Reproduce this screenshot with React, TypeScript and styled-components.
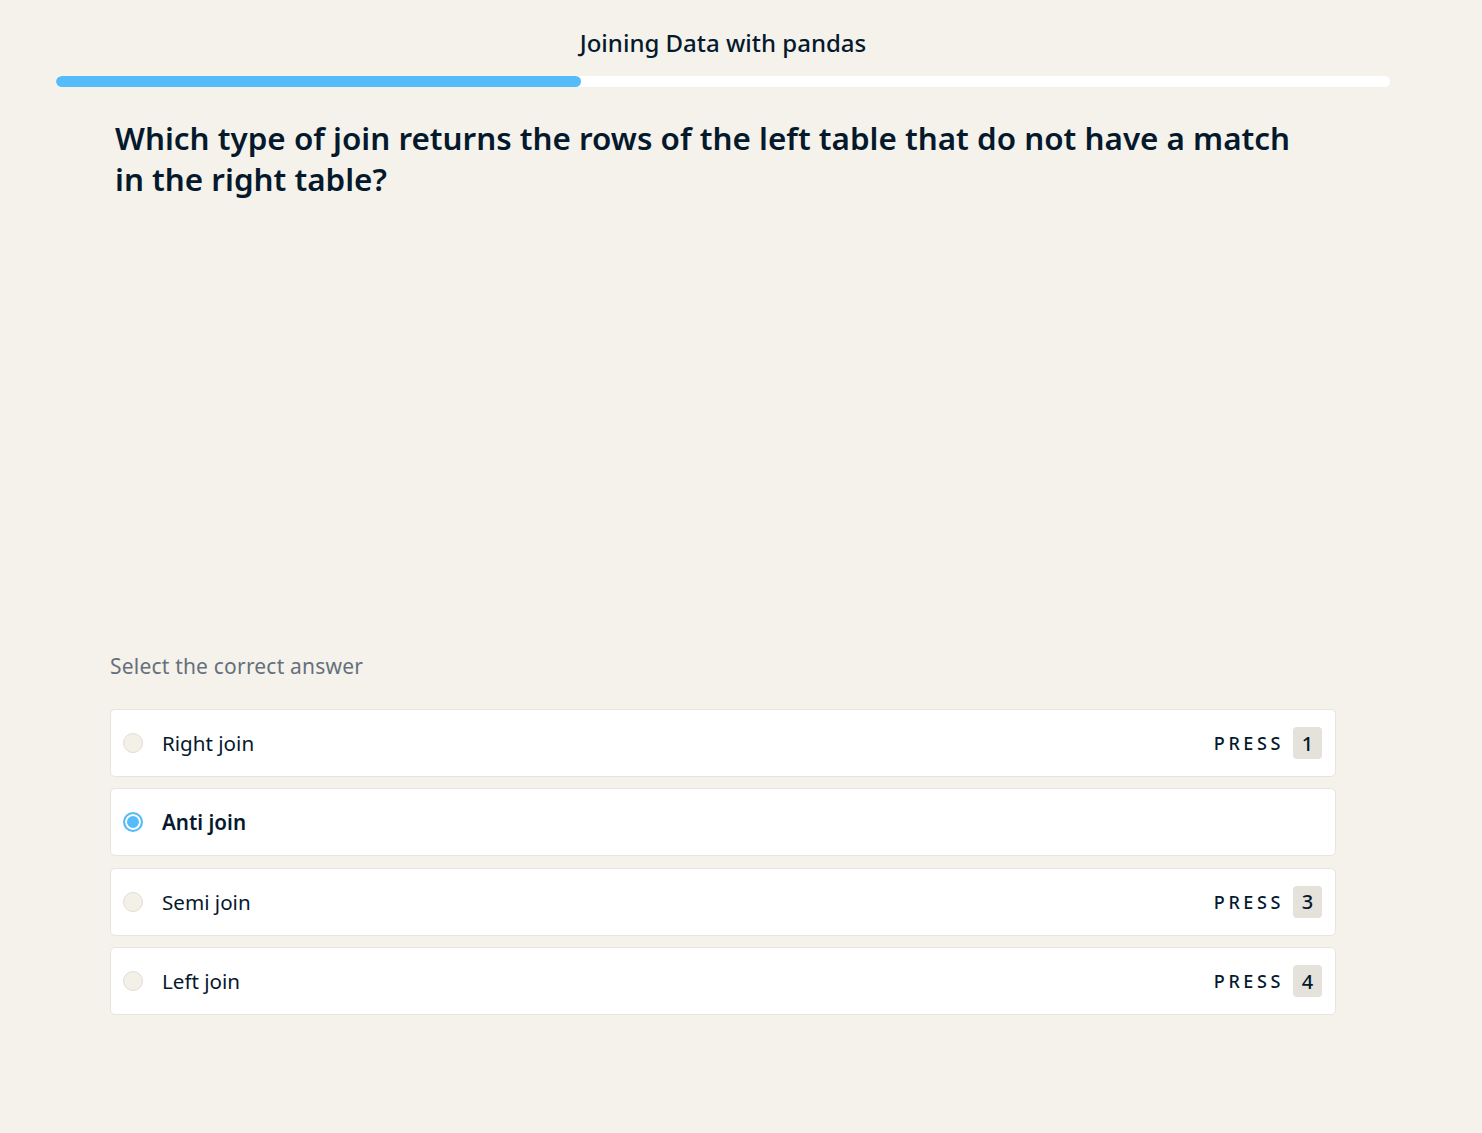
import React from "react";
import styled, { createGlobalStyle } from "styled-components";

const Global = createGlobalStyle`
  html, body { margin: 0; padding: 0; background: #f5f2eb; }
  body { font-family: "Noto Sans", "Open Sans", sans-serif; color: #05192d; }
`;

const Page = styled.main`
  width: 1446px;
  box-sizing: border-box;
  padding: 27px 56px 0;
  min-height: 1133px;
`;

const Title = styled.h1`
  margin: 0;
  text-align: center;
  font-size: 24px;
  line-height: 32px;
  font-weight: 500;
  color: #05192d;
`;

const Track = styled.div`
  margin-top: 17px;
  height: 11px;
  border-radius: 6px;
  background: #ffffff;
  overflow: hidden;
`;

const Fill = styled.div`
  height: 100%;
  border-radius: 6px;
  background: #56bbf9;
`;

const Body = styled.section`
  width: 1226px;
  margin: 0 auto;
`;

const Question = styled.h2`
  margin: 30px 0 0;
  padding-left: 5px;
  padding-right: 30px;
  font-size: 31.4px;
  line-height: 41px;
  font-weight: 600;
  color: #05192d;
`;

const Prompt = styled.p`
  margin: 454px 0 0;
  font-size: 21px;
  line-height: 26px;
  color: #65707c;
  letter-spacing: 0.2px;
`;

const Options = styled.div`
  margin-top: 30px;
  display: flex;
  flex-direction: column;
  gap: 11.4px;
`;

const Option = styled.div`
  height: 68px;
  box-sizing: border-box;
  display: flex;
  align-items: center;
  padding: 0 13px 0 12px;
  background: #ffffff;
  border: 1px solid #e8e5de;
  border-radius: 5px;
`;

const Radio = styled.span<{ $checked?: boolean }>`
  width: 20px;
  height: 20px;
  box-sizing: border-box;
  border-radius: 50%;
  flex: none;
  border: ${(p) => (p.$checked ? "2px solid #56bbf9" : "1px solid #e0ddd4")};
  background: ${(p) => (p.$checked ? "#56bbf9" : "#f3f0e8")};
  box-shadow: ${(p) => (p.$checked ? "inset 0 0 0 2px #ffffff" : "none")};
`;

const Label = styled.span<{ $bold?: boolean }>`
  margin-left: 19px;
  flex: 1;
  font-size: 20.6px;
  font-weight: ${(p) => (p.$bold ? 600 : 400)};
  color: #05192d;
`;

const Press = styled.span`
  font-size: 18px;
  font-weight: 500;
  letter-spacing: 3.6px;
  margin-right: 9px;
  color: #05192d;
`;

const Key = styled.span`
  width: 29px;
  height: 32px;
  border-radius: 4px;
  background: #e5e2db;
  display: flex;
  align-items: center;
  justify-content: center;
  font-size: 20px;
  font-weight: 500;
  color: #05192d;
`;

const answers = [
  { label: "Right join", key: "1" },
  { label: "Anti join", key: "2", checked: true },
  { label: "Semi join", key: "3" },
  { label: "Left join", key: "4" },
];

export default function App() {
  return (
    <>
      <Global />
      <Page>
        <Title>Joining Data with pandas</Title>
        <Track>
          <Fill style={{ width: `${((581 - 56) / (1390 - 56)) * 100}%` }} />
        </Track>
        <Body>
          <Question>
            Which type of join returns the rows of the left table that do not have a match in the right table?
          </Question>
          <Prompt>Select the correct answer</Prompt>
          <Options>
            {answers.map((a) => (
              <Option key={a.key}>
                <Radio $checked={a.checked} />
                <Label $bold={a.checked}>{a.label}</Label>
                {!a.checked && (
                  <>
                    <Press>PRESS</Press>
                    <Key>{a.key}</Key>
                  </>
                )}
              </Option>
            ))}
          </Options>
        </Body>
      </Page>
    </>
  );
}
